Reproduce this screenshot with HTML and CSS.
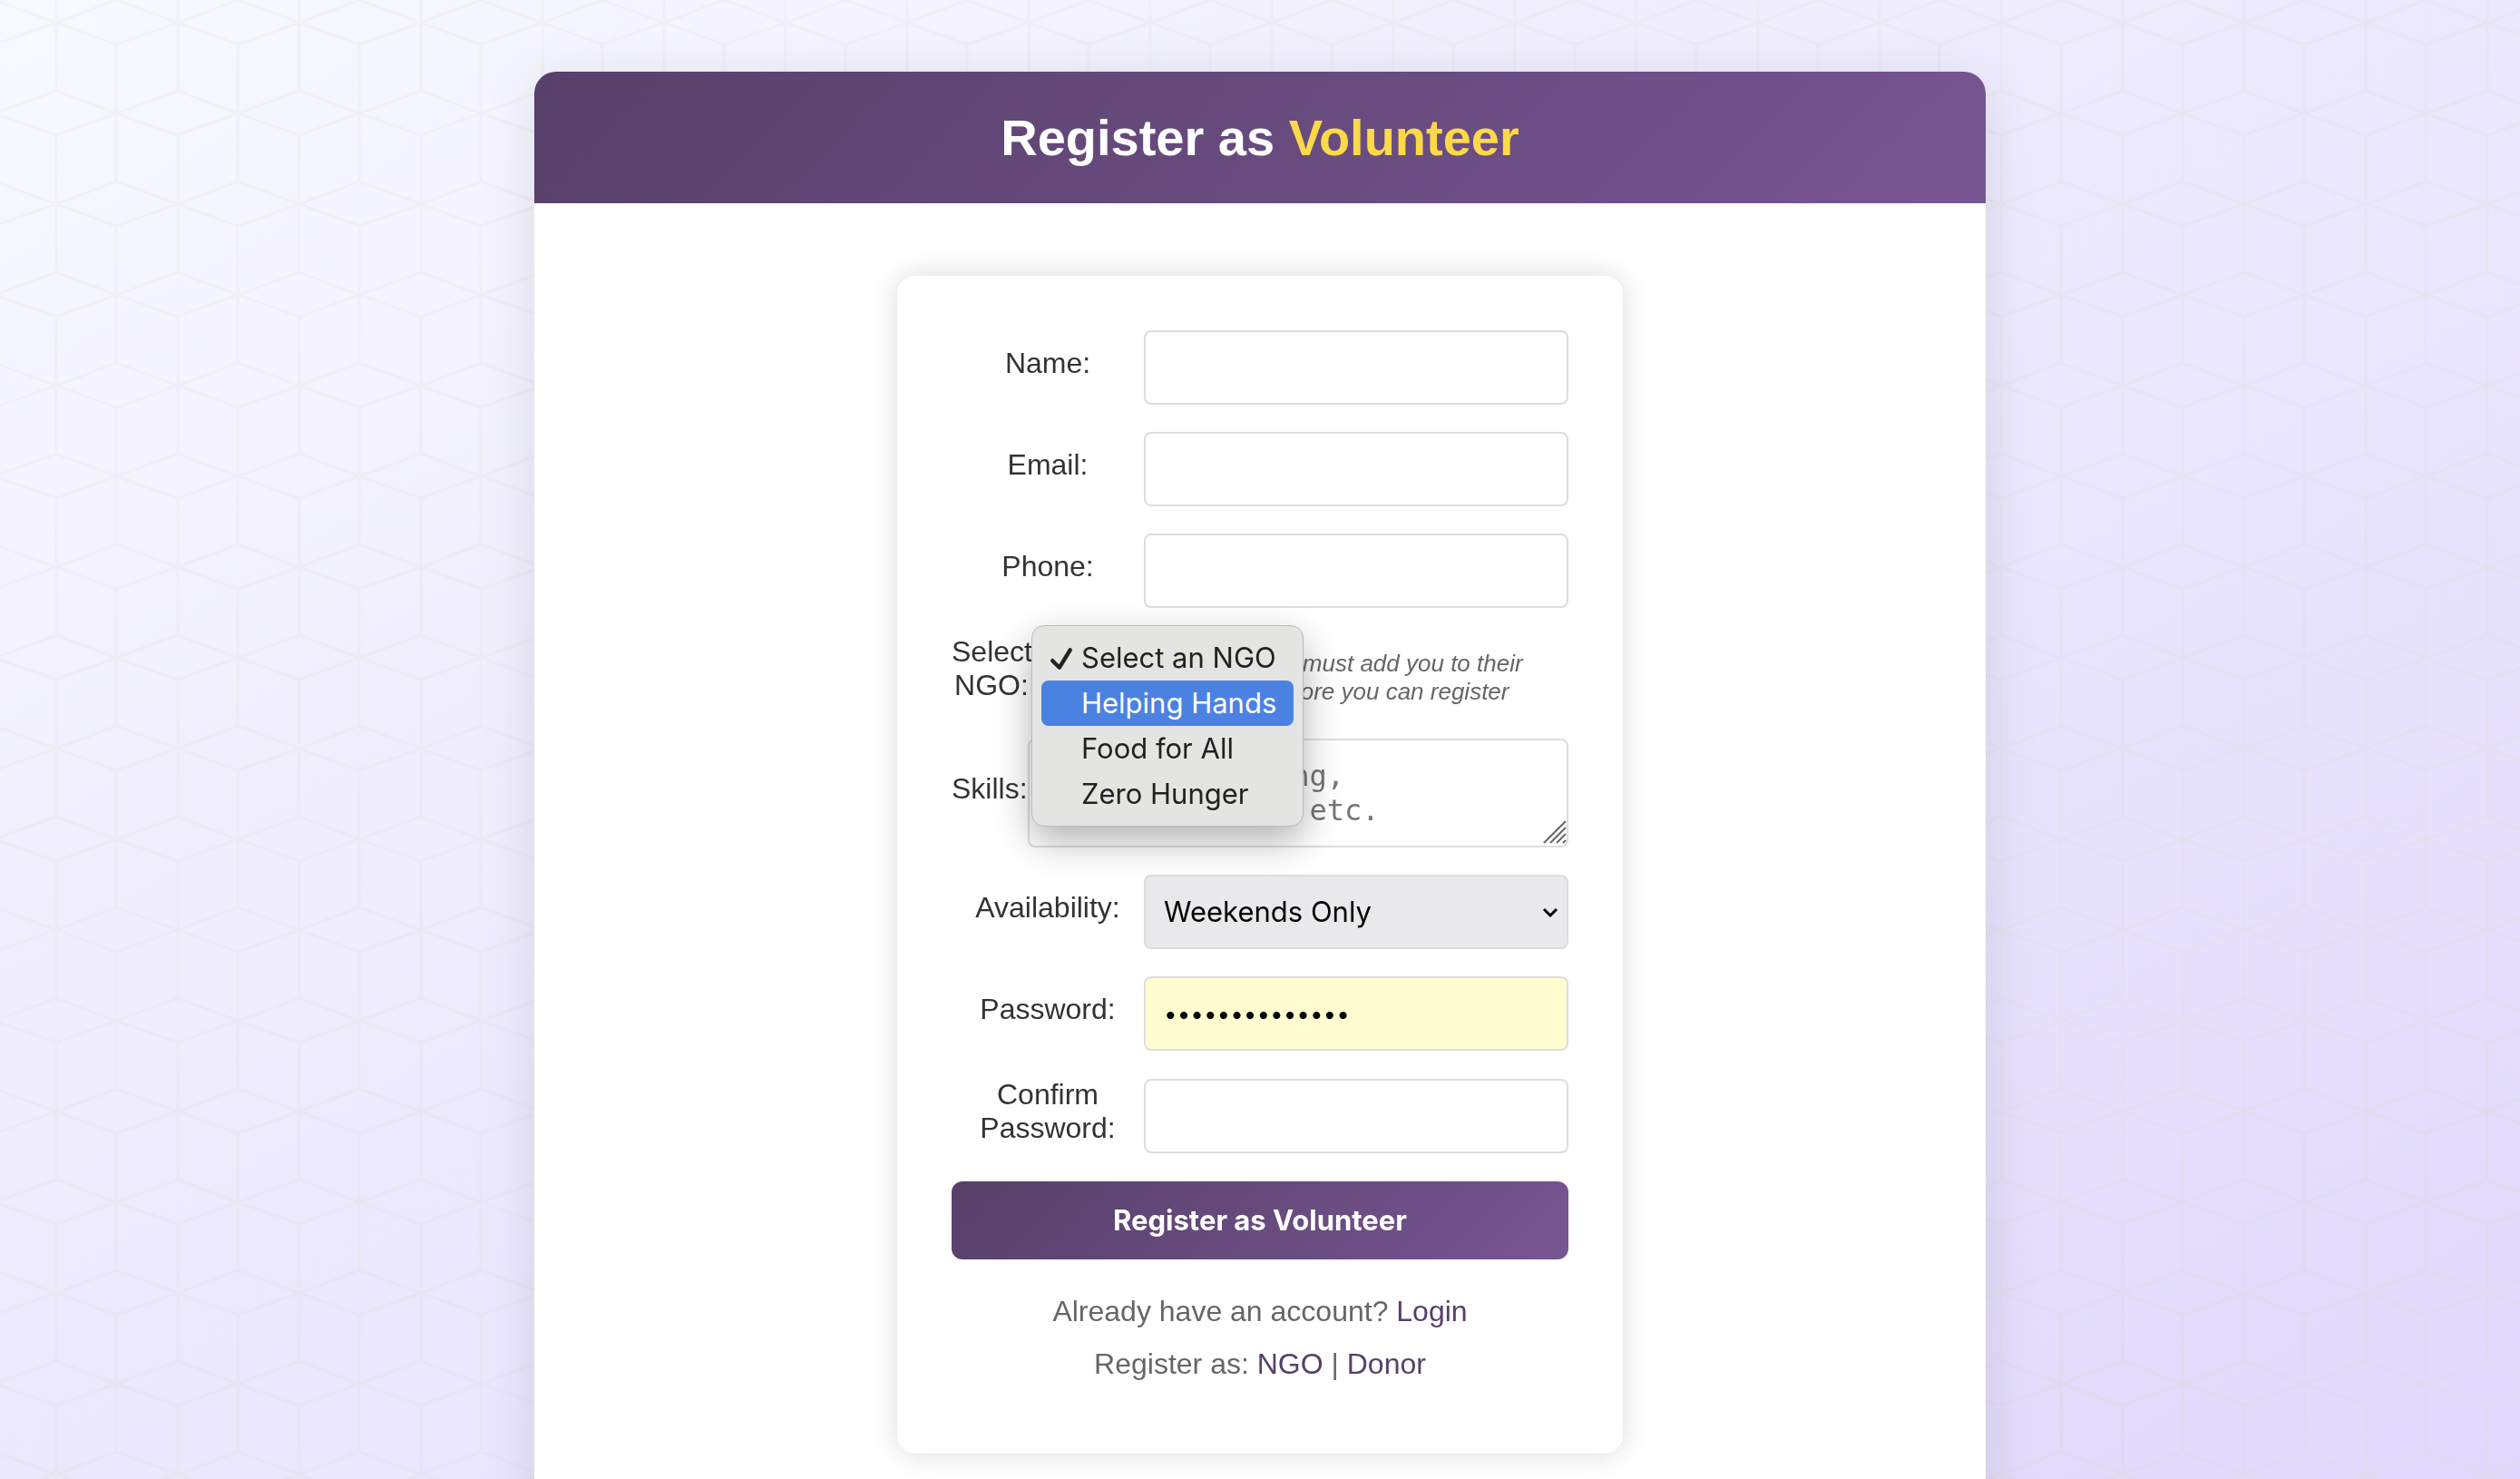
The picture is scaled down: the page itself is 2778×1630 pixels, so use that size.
FILE: index.html
```html
<!DOCTYPE html>
<html lang="en">
<head>
<meta charset="utf-8">
<meta name="viewport" content="width=device-width, initial-scale=1">
<title>Register as Volunteer</title>
<link rel="stylesheet" href="styles.css">
</head>
<body>
<svg class="backdrop" aria-hidden="true">
  <defs>
    <pattern id="cubes" width="134" height="200" patternUnits="userSpaceOnUse">
      <path d="M-6 49L62 25L128 0L196 25M-6 0L62 25L128 49L196 25M62 -51V100M128 49V200M-6 125L62 100L128 125L196 149M-6 125L62 149L128 125L196 100M62 149V225M-6 200L62 225L128 200"/>
    </pattern>
  </defs>
  <rect width="100%" height="100%" fill="url(#cubes)"/>
</svg>
<main class="container">
  <header class="header">
    <h1>Register as <span class="accent">Volunteer</span></h1>
  </header>
  <form class="form">
    <div class="row">
      <label for="name">Name:</label>
      <input class="control" id="name" type="text">
    </div>
    <div class="row">
      <label for="email">Email:</label>
      <input class="control" id="email" type="email">
    </div>
    <div class="row">
      <label for="phone">Phone:</label>
      <input class="control" id="phone" type="tel">
    </div>
    <div class="row row-ngo">
      <label for="ngo">Select NGO:</label>
      <div class="picker">
        <select class="control" id="ngo">
          <option>Select an NGO</option>
          <option>Helping Hands</option>
          <option>Food for All</option>
          <option>Zero Hunger</option>
        </select>
        <ul class="menu">
          <li><svg class="check" viewBox="0 0 24 24" aria-hidden="true"><path d="M3 14L10 21L21 3"/></svg>Select an NGO</li>
          <li class="active">Helping Hands</li>
          <li>Food for All</li>
          <li>Zero Hunger</li>
        </ul>
      </div>
      <small class="hint">The NGO must add you to their team before you can register</small>
    </div>
    <div class="row row-skills">
      <label for="skills">Skills:</label>
      <div class="area">
        <textarea class="control" id="skills" placeholder="Cooking, driving, communication, etc."></textarea>
        <svg class="grip" viewBox="0 0 26 26" aria-hidden="true"><path d="M1 25L25 1M8 25L25 8M15 25L25 15M22 25L25 22"/></svg>
      </div>
    </div>
    <div class="row">
      <label for="availability">Availability:</label>
      <div class="dropdown">
        <select class="control" id="availability">
          <option>Weekends Only</option>
        </select>
        <svg class="chevron" viewBox="0 0 18 12" aria-hidden="true"><path d="M2 2L9 9L16 2"/></svg>
      </div>
    </div>
    <div class="row">
      <label for="password">Password:</label>
      <input class="control filled" id="password" type="password" value="volunteer12345">
    </div>
    <div class="row">
      <label for="confirm">Confirm Password:</label>
      <input class="control" id="confirm" type="password">
    </div>
    <button class="submit" type="submit">Register as Volunteer</button>
    <div class="links">
      <p>Already have an account? <a href="#login">Login</a></p>
      <p>Register as: <a href="#ngo-signup">NGO</a> | <a href="#donor-signup">Donor</a></p>
    </div>
  </form>
</main>
</body>
</html>
```
FILE: styles.css
```css
* {
  box-sizing: border-box;
}

html {
  scrollbar-width: none;
}

body {
  margin: 0;
  min-height: 100vh;
  padding: 79px 40px 80px;
  background: linear-gradient(to bottom right, #f8f9ff, #e0d8fb) fixed;
  color: #333;
  font: 32px/37px "Liberation Sans", Arial, sans-serif;
}

.backdrop {
  position: fixed;
  inset: 0;
  z-index: -1;
  width: 100%;
  height: 100%;
}

.backdrop path {
  fill: none;
  stroke: rgba(215, 215, 195, 0.16);
  stroke-width: 3;
}

.container {
  max-width: 1600px;
  margin: 0 auto;
  padding-bottom: 80px;
  overflow: hidden;
  border-radius: 24px;
  background: #fff;
  box-shadow: 0 10px 60px rgba(0, 0, 0, 0.1);
}

.header {
  padding: 40px;
  background: linear-gradient(135deg, #574069, #775592);
  color: #fff;
  text-align: center;
}

h1 {
  margin: 0;
  font-size: 56px;
  line-height: 65px;
}

.accent {
  color: #fbd949;
}

.form {
  display: flex;
  flex-direction: column;
  gap: 30px;
  max-width: 800px;
  margin: 80px auto 0;
  padding: 60px;
  border-radius: 20px;
  background: #fff;
  box-shadow: 0 0 30px rgba(0, 0, 0, 0.15);
}

.row {
  display: grid;
  grid-template-columns: 1fr 468px;
  align-items: center;
}

.row-skills {
  grid-template-columns: auto 1fr;
}

.row-ngo {
  grid-template-columns: 88px 130px 1fr;
}

label {
  padding: 0 20px;
  margin-bottom: 10px;
  text-align: center;
}

.row-skills label,
.row-ngo label {
  padding: 0;
}

.control {
  display: block;
  width: 100%;
  height: 82px;
  padding: 20px;
  border: 2px solid #ddd;
  border-radius: 8px;
  background: #fff;
  color: #000;
  font: 31px/38px Inter, sans-serif;
}

select.control {
  appearance: none;
  background: #e9e9eb;
}

textarea.control {
  height: 120px;
  font-family: "DejaVu Sans Mono", monospace;
  font-size: 32px;
  resize: none;
}

textarea::placeholder {
  color: #757575;
}

.control.filled {
  background: #fffdd0;
  font-size: 26px;
}

.area,
.dropdown,
.picker {
  position: relative;
}

.grip {
  position: absolute;
  right: 2px;
  bottom: 4px;
  width: 26px;
  height: 26px;
  fill: none;
  stroke: #666;
  stroke-width: 2;
}

.chevron {
  position: absolute;
  top: 36px;
  right: 11px;
  width: 18px;
  height: 12px;
  fill: none;
  stroke: #000;
  stroke-width: 3;
}

.hint {
  padding: 0 40px;
  margin-top: 10px;
  color: #666;
  font-size: 26px;
  font-style: italic;
  line-height: 31px;
  text-align: center;
}

.menu {
  position: absolute;
  z-index: 1;
  top: -12px;
  left: 0;
  width: 300px;
  margin: 0;
  padding: 10px;
  border: 1px solid #bbb;
  border-radius: 14px;
  background: #e4e4e2;
  box-shadow: 0 16px 40px rgba(0, 0, 0, 0.3);
  color: #222;
  font: 31px/50px Inter, sans-serif;
  list-style: none;
}

.menu li {
  position: relative;
  padding-left: 44px;
  border-radius: 8px;
  white-space: nowrap;
}

.menu .active {
  background: #4a82e2;
  color: #fff;
}

.check {
  position: absolute;
  top: 13px;
  left: 9px;
  width: 26px;
  height: 26px;
  fill: none;
  stroke: #222;
  stroke-width: 4;
  stroke-linecap: round;
  stroke-linejoin: round;
}

.submit {
  height: 86px;
  border: 0;
  border-radius: 12px;
  background: linear-gradient(135deg, #574069, #775592);
  color: #fff;
  font: 700 31px/38px Inter, sans-serif;
}

.links {
  margin-top: 8px;
  color: #666;
  text-align: center;
}

.links p {
  margin: 0 0 20px;
  line-height: 38px;
}

.links a {
  color: #56406a;
  text-decoration: none;
}
```
